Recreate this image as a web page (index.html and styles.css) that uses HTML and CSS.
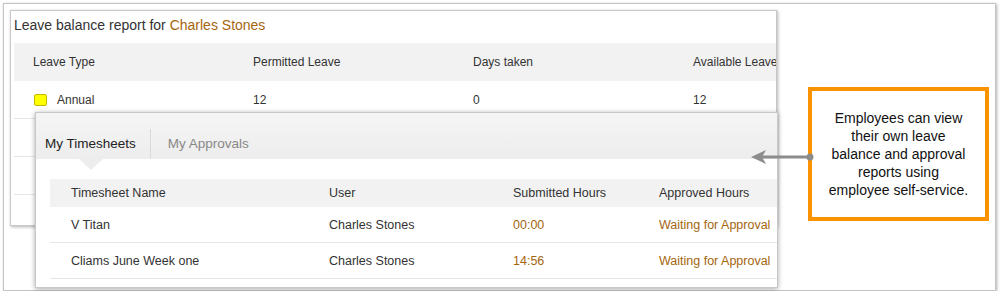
FILE: index.html
```html
<!DOCTYPE html>
<html lang="en">
	<head>
		<meta charset="UTF-8">
		<title>Leave balance report</title>
		<link rel="stylesheet" href="styles.css">
	</head>
	<body>
	<div class="frame">
		<div class="balance">
			<h2>Leave balance report for <span class="name">Charles Stones</span></h2>
			<div class="lrow head">
				<span>Leave Type</span>
				<span>Permitted Leave</span>
				<span>Days taken</span>
				<span>Available Leave</span>
			</div>
			<div class="lrow">
				<span class="type"><i class="swatch"></i>Annual</span>
				<span>12</span>
				<span>0</span>
				<span>12</span>
			</div>
			<div class="lrow"></div>
			<div class="lrow"></div>
			<div class="lrow"></div>
		</div>

		<div class="callout">
			<p>Employees can view<br>their own leave<br>balance and approval<br>reports using<br>employee self-service.</p>
		</div>

		<div class="timesheets">
			<div class="tabs">
				<span class="tab active">My Timesheets</span>
				<span class="tab">My Approvals</span>
			</div>
			<div class="sheet">
				<div class="srow head">
					<span>Timesheet Name</span>
					<span>User</span>
					<span>Submitted Hours</span>
					<span>Approved Hours</span>
				</div>
				<div class="srow">
					<span>V Titan</span>
					<span>Charles Stones</span>
					<span class="brown">00:00</span>
					<span class="brown">Waiting for Approval</span>
				</div>
				<div class="srow">
					<span>Cliams June Week one</span>
					<span>Charles Stones</span>
					<span class="brown">14:56</span>
					<span class="brown">Waiting for Approval</span>
				</div>
			</div>
		</div>

		<svg class="pointer" width="70" height="20" viewBox="0 0 70 20">
			<line x1="12" y1="10" x2="62" y2="10" stroke="#8c8c8c" stroke-width="3"/>
			<polygon points="3,10 18,3 14,10 18,17" fill="#8c8c8c"/>
			<circle cx="62" cy="10" r="3.5" fill="#8c8c8c"/>
		</svg>
	</div>
	</body>
</html>
```

FILE: styles.css
```css
body {
	margin: 0;
	font-family: "Liberation Sans", Arial, sans-serif;
	color: #333;
	background: #fff;
}

.frame {
	position: relative;
	box-sizing: border-box;
	width: 993px;
	height: 288px;
	margin: 3px 0 0 3px;
	padding: 6px;
	border: 1px solid #c4c4c4;
	box-shadow: 1px 1px 3px rgba(0, 0, 0, .3);
	display: flex;
	align-items: flex-start;
}

.balance {
	box-sizing: border-box;
	width: 771px;
	height: 216px;
	padding-left: 3px;
	border: 1px solid #c8c8c8;
	box-shadow: 1px 1px 3px rgba(0, 0, 0, .3);
	overflow: hidden;
}

.balance h2 {
	font-size: 14px;
	font-weight: normal;
	line-height: 20px;
	margin: 4px 0 8px;
	white-space: nowrap;
}

.name, .brown {
	color: #a5660f;
}

.lrow {
	display: grid;
	grid-template-columns: 220px 220px 220px 1fr;
	align-items: center;
	height: 37px;
	padding-left: 19px;
	border-bottom: 1px solid #e6e6e6;
	font-size: 12px;
	white-space: nowrap;
}

.lrow.head {
	height: 38px;
	background: #f2f2f2;
	border-bottom: 0;
}

.type {
	display: flex;
	align-items: center;
}

.swatch {
	box-sizing: border-box;
	width: 13px;
	height: 12px;
	margin: 0 10px 0 1px;
	background: #ffff00;
	border: 1px solid #c9b800;
	border-radius: 2px;
}

.callout {
	box-sizing: border-box;
	width: 182px;
	height: 134px;
	margin: 77px 0 0 31px;
	border: 4px solid #fb9300;
	display: flex;
	align-items: center;
	justify-content: center;
	text-align: center;
	font-size: 14px;
	line-height: 18px;
	color: #111;
}

.callout p {
	margin: 0;
}

.timesheets {
	position: absolute;
	left: 31px;
	top: 108px;
	box-sizing: border-box;
	width: 743px;
	height: 176px;
	background: #fff;
	border: 1px solid #c8c8c8;
	box-shadow: 0 1px 5px rgba(0, 0, 0, .35);
}

.tabs {
	height: 46px;
	background: linear-gradient(#f5f5f5, #ededed);
	display: flex;
	align-items: flex-end;
}

.tab {
	height: 30px;
	line-height: 30px;
	font-size: 13.5px;
	padding: 0 14px 0 17px;
	color: #888;
}

.tab.active {
	position: relative;
	padding-left: 9px;
	color: #222;
	border-right: 1px solid #dadada;
}

.tab.active::after {
	content: "";
	position: absolute;
	left: 43px;
	top: 100%;
	border-top: 11px solid #ededed;
	border-left: 12px solid transparent;
	border-right: 12px solid transparent;
}

.sheet {
	margin: 20px 0 0 14px;
}

.srow {
	display: grid;
	grid-template-columns: 258px 184px 146px 1fr;
	align-items: center;
	height: 35px;
	padding-left: 21px;
	border-bottom: 1px solid #e6e6e6;
	font-size: 12.5px;
	white-space: nowrap;
}

.srow.head {
	height: 28px;
	background: #f2f2f2;
	border-bottom: 0;
}

.pointer {
	position: absolute;
	left: 744px;
	top: 143px;
}
```
